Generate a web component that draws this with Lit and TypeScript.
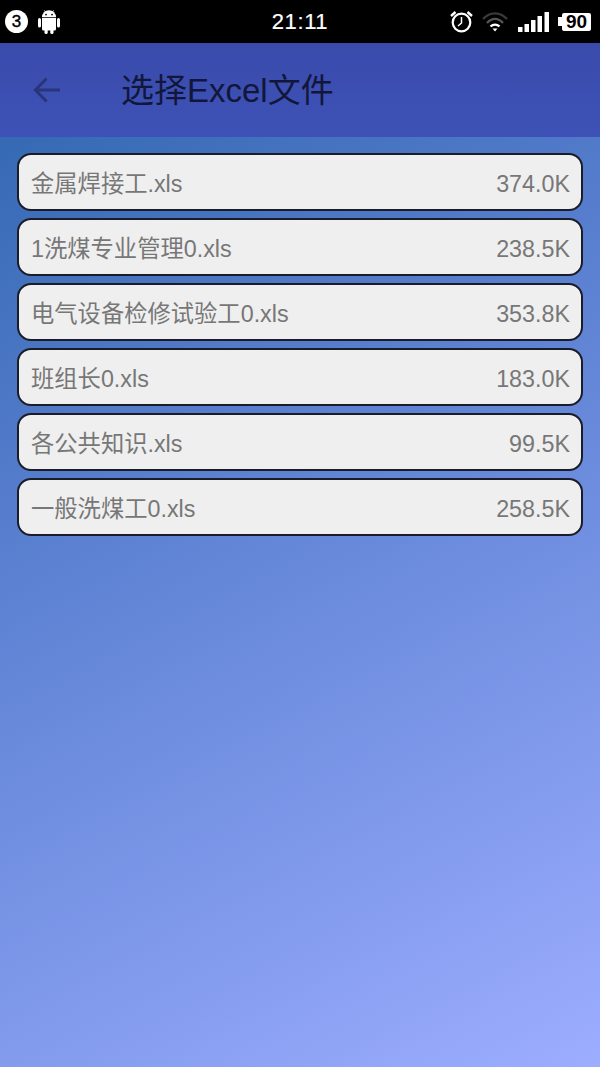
import { LitElement, html, css, svg } from 'lit';
import { customElement } from 'lit/decorators.js';

const files = [
  { name: '金属焊接工.xls', size: '374.0K' },
  { name: '1洗煤专业管理0.xls', size: '238.5K' },
  { name: '电气设备检修试验工0.xls', size: '353.8K' },
  { name: '班组长0.xls', size: '183.0K' },
  { name: '各公共知识.xls', size: '99.5K' },
  { name: '一般洗煤工0.xls', size: '258.5K' },
];

const androidIcon = svg`
  <path d="M4 7.2a7 7 0 0 1 14 0z" fill="#fff"/>
  <path d="M6.5 0.5l2 3M15.5 0.5l-2 3" stroke="#fff" stroke-width="1" fill="none"/>
  <circle cx="8" cy="4.6" r="0.9" fill="#000"/>
  <circle cx="14" cy="4.6" r="0.9" fill="#000"/>
  <path d="M4 8h14v11a1.5 1.5 0 0 1-1.5 1.5h-11A1.5 1.5 0 0 1 4 19z" fill="#fff"/>
  <rect x="0" y="8" width="3" height="9.5" rx="1.5" fill="#fff"/>
  <rect x="19" y="8" width="3" height="9.5" rx="1.5" fill="#fff"/>
  <rect x="6.5" y="19" width="3.2" height="5" rx="1.5" fill="#fff"/>
  <rect x="12.3" y="19" width="3.2" height="5" rx="1.5" fill="#fff"/>
`;

@customElement('app-root')
export class AppRoot extends LitElement {
  static styles = css`
    :host {
      display: flex;
      flex-direction: column;
      height: 1067px;
      font-family: 'Liberation Sans', 'Noto Sans CJK SC', sans-serif;
      background: linear-gradient(152deg, #2a62ab 0%, #5f83d4 45%, #9dadff 100%);
    }

    .status {
      height: 43px;
      background: #000;
      display: grid;
      grid-template-columns: 1fr auto 1fr;
      align-items: center;
      color: #fff;
    }

    .status-left {
      display: flex;
      align-items: center;
      gap: 10px;
      padding-left: 5px;
    }

    .badge {
      width: 23px;
      height: 23px;
      border-radius: 50%;
      background: #fff;
      color: #000;
      font-size: 17px;
      display: flex;
      align-items: center;
      justify-content: center;
      -webkit-text-stroke: 0.4px #000;
    }

    .time {
      font-size: 22px;
      letter-spacing: 0.6px;
      -webkit-text-stroke: 0.2px #fff;
    }

    .status-right {
      display: flex;
      align-items: center;
      justify-content: flex-end;
      padding-right: 9px;
    }

    .alarm {
      margin-right: 9px;
    }

    .wifi {
      margin-right: 10px;
    }

    .signal {
      margin-right: 8px;
    }

    .battery {
      display: flex;
      align-items: center;
    }

    .battery i {
      width: 4px;
      height: 9px;
      background: #fff;
    }

    .battery span {
      width: 29px;
      height: 18px;
      background: #fff;
      color: #000;
      border-radius: 2px;
      font-size: 19px;
      font-weight: 700;
      line-height: 18px;
      text-align: center;
    }

    .bar {
      height: 94px;
      background: linear-gradient(#394cac, #3e51b6);
      display: flex;
      align-items: center;
      padding-left: 33px;
    }

    .bar svg {
      display: block;
    }

    .title {
      margin-left: 61px;
      padding-top: 2px;
      font-size: 33px;
      line-height: 40px;
      color: #12163a;
    }

    .list {
      display: flex;
      flex-direction: column;
      gap: 7px;
      padding: 16px 17px;
    }

    .row {
      height: 54px;
      border: 2px solid #1a1c28;
      border-radius: 14px;
      background: #efefef;
      display: flex;
      align-items: baseline;
      justify-content: space-between;
      padding: 0 11px 0 12px;
      font-size: 23.3px;
      line-height: 58px;
      color: #777777;
    }
  `;

  render() {
    return html`
      <div class="status">
        <div class="status-left">
          <div class="badge">3</div>
          <svg width="22" height="24" viewBox="0 0 22 24">${androidIcon}</svg>
        </div>
        <div class="time">21:11</div>
        <div class="status-right">
          <svg class="alarm" width="23" height="23" viewBox="0 0 23 23" fill="none" stroke="#fff">
            <circle cx="11.5" cy="12.5" r="8.8" stroke-width="2.2"/>
            <path d="M11.5 7V13L8 16" stroke-width="1.5"/>
            <path d="M1 6L5.5 2M22 6L17.5 2" stroke-width="2.4"/>
          </svg>
          <svg class="wifi" width="26" height="20" viewBox="0 0 26 20" fill="none">
            <path d="M1 7C8 -0.5 18 -0.5 25 7" stroke="#3a3a3a" stroke-width="2.4"/>
            <path d="M5 11C10 5.5 16 5.5 21 11" stroke="#555" stroke-width="2.4"/>
            <path d="M8.5 14.5C11 12 15 12 17.5 14.5" stroke="#fff" stroke-width="2.4"/>
            <path d="M10.5 16.5h5L13 19.5z" fill="#fff"/>
          </svg>
          <svg class="signal" width="32" height="20" viewBox="0 0 32 20" fill="#fff">
            <rect x="0" y="15" width="4.5" height="5"/>
            <rect x="6.5" y="12" width="4.5" height="8"/>
            <rect x="13" y="8" width="4.5" height="12"/>
            <rect x="19.5" y="4" width="4.5" height="16"/>
            <rect x="26.5" y="0" width="4.5" height="20"/>
          </svg>
          <div class="battery"><i></i><span>90</span></div>
        </div>
      </div>
      <div class="bar">
        <svg width="27" height="26" viewBox="0 0 27 26" fill="none" stroke="#2a3478" stroke-width="3">
          <path d="M27 13H3M13.5 1.5L2.5 13L13.5 24.5"/>
        </svg>
        <div class="title">选择Excel文件</div>
      </div>
      <div class="list">
        ${files.map(f => html`
          <div class="row">
            <span>${f.name}</span>
            <span>${f.size}</span>
          </div>
        `)}
      </div>
    `;
  }
}
